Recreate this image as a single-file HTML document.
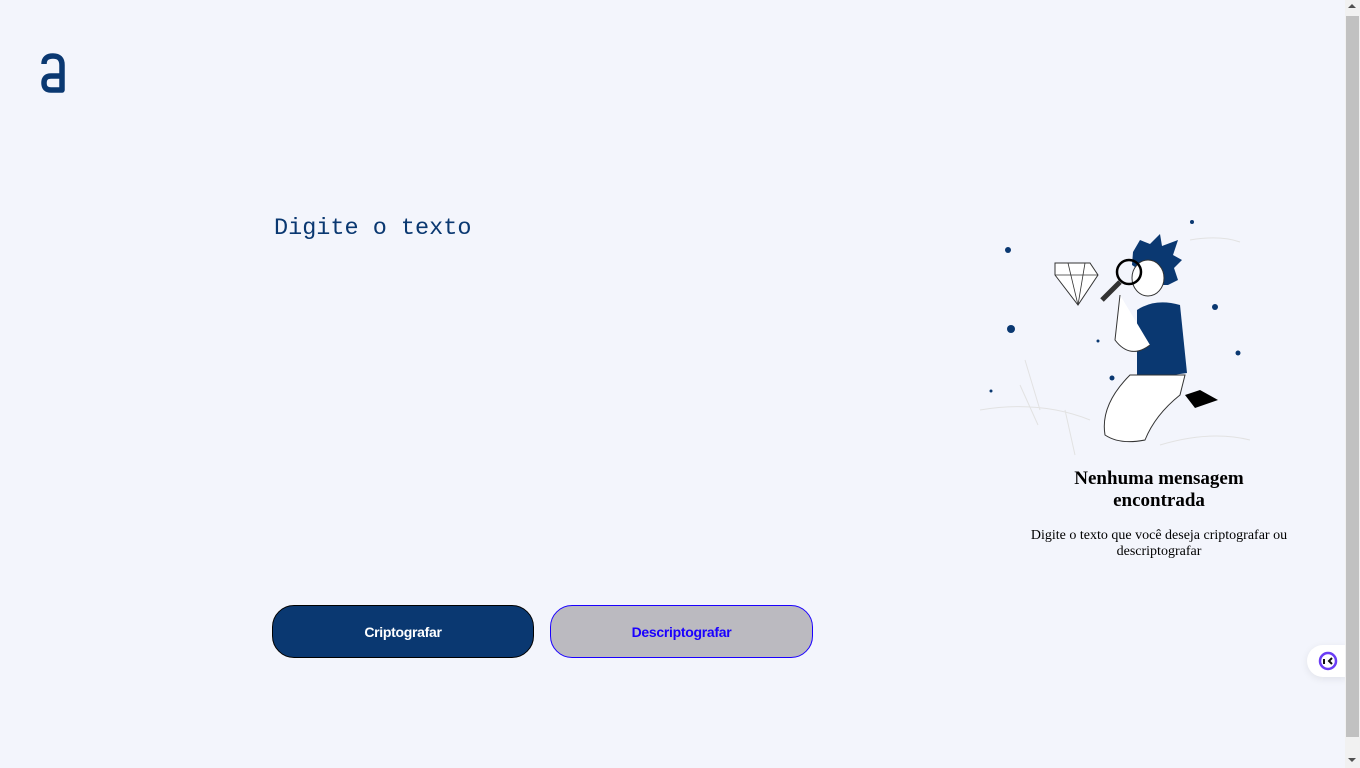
<!DOCTYPE html>
<html><head><meta charset="utf-8">
<style>
html,body{margin:0;padding:0;width:1360px;height:768px;overflow:hidden;background:#f3f5fc;font-family:"Liberation Sans",sans-serif;}
.ta{position:absolute;left:274px;top:215px;font-family:"Liberation Mono",monospace;font-size:23.5px;color:#0a3871;}
.btn{position:absolute;top:605px;width:262px;height:53px;box-sizing:border-box;border-radius:22px;font-weight:bold;font-size:14px;display:flex;align-items:center;justify-content:center;letter-spacing:-0.3px;}
.b1{left:272px;background:#0a3871;color:#fff;border:1px solid #000;}
.b2{left:550px;width:263px;background:#bbbac0;color:#1a00ff;border:1px solid #1a00ff;}
.h{position:absolute;left:1040px;width:238px;top:468px;text-align:center;font-family:"Liberation Serif",serif;font-weight:bold;font-size:19px;line-height:22px;color:#000;}
.p{position:absolute;left:1010px;width:298px;top:528px;text-align:center;font-family:"Liberation Serif",serif;font-size:14px;line-height:16px;color:#000;}
.sb{position:absolute;left:1345px;top:0;width:15px;height:768px;background:#f1f1f1;}
.th{position:absolute;left:1346px;top:16px;width:13px;height:721px;background:#c1c1c1;}
.chat{position:absolute;left:1307px;top:645px;width:40px;height:32px;background:#fff;border-radius:16px 0 0 16px;box-shadow:0 2px 8px rgba(0,0,0,.08);}
</style></head><body>
<svg style="position:absolute;left:38px;top:52px" width="32" height="44" viewBox="0 0 32 44">
<path d="M6 12 Q6 4 15 4 Q24 4 24 13 L24 38 L13 38 Q6 38 6 31 Q6 24 13 24 L24 24" fill="none" stroke="#0a3871" stroke-width="5.5" stroke-linejoin="round"/>
</svg>
<div class="ta">Digite o texto</div>
<div class="btn b1">Criptografar</div>
<div class="btn b2">Descriptografar</div>
<svg style="position:absolute;left:980px;top:210px" width="280" height="250" viewBox="0 0 280 250">
<g fill="#0a3871"><circle cx="28" cy="40" r="3"/><circle cx="212" cy="12" r="2"/><circle cx="31" cy="119" r="4"/><circle cx="235" cy="97" r="3"/><circle cx="118" cy="131" r="1.5"/><circle cx="258" cy="143" r="2.5"/><circle cx="132" cy="168" r="2.5"/><circle cx="11" cy="181" r="1.5"/></g>
<g fill="none" stroke="#e2e2e2" stroke-width="1"><path d="M45 150 L60 200 M40 175 L58 215 M85 200 L95 245 M0 200 Q60 190 110 210 M180 235 Q230 220 270 230 M210 30 Q240 25 260 32"/></g>
<path d="M75 53 L110 53 L118 65 L98 95 L75 65 Z" fill="#fff" stroke="#333"/>
<path d="M75 65 L118 65 M88 53 L98 95 L105 53" fill="none" stroke="#333" stroke-width=".8"/>
<path d="M153 42 L160 30 L170 34 L180 24 L182 36 L198 30 L193 45 L202 50 L194 58 L198 70 L188 75 L175 75 Q160 60 152 55 Z" fill="#0a3871"/>
<ellipse cx="168" cy="68" rx="16" ry="18" fill="#fff" stroke="#333"/>
<path d="M157 100 Q175 88 200 95 L207 163 L157 170 Z" fill="#0a3871"/>
<path d="M140 85 L135 130 Q150 150 170 135" fill="#fff" stroke="#333"/>
<path d="M150 165 Q120 195 125 225 Q140 235 165 230 Q175 205 200 185 L205 165 Z" fill="#fff" stroke="#333"/>
<path d="M205 185 L220 180 L238 190 L215 198 Z" fill="#000"/>
<circle cx="149" cy="62" r="12" fill="none" stroke="#000" stroke-width="2.5"/>
<path d="M140 72 L122 90" stroke="#333" stroke-width="5" fill="none"/>
</svg>
<div class="h">Nenhuma mensagem encontrada</div>
<div class="p">Digite o texto que você deseja criptografar ou descriptografar</div>
<div class="chat"><svg width="40" height="32"><circle cx="21" cy="16" r="8" fill="none" stroke="#6a3df5" stroke-width="2.5"/><rect x="16" y="14" width="2" height="5" fill="#111"/><path d="M25 13 L22 16 L25 19" stroke="#111" stroke-width="2" fill="none"/></svg></div>
<div class="sb"></div><div class="th"></div>
<div style="position:absolute;left:1348px;top:4px;width:0;height:0;border:4px solid transparent;border-bottom-color:#505050;border-top:0"></div>
<div style="position:absolute;left:1348px;top:758px;width:0;height:0;border:4px solid transparent;border-top-color:#505050;border-bottom:0"></div>
</body></html>
